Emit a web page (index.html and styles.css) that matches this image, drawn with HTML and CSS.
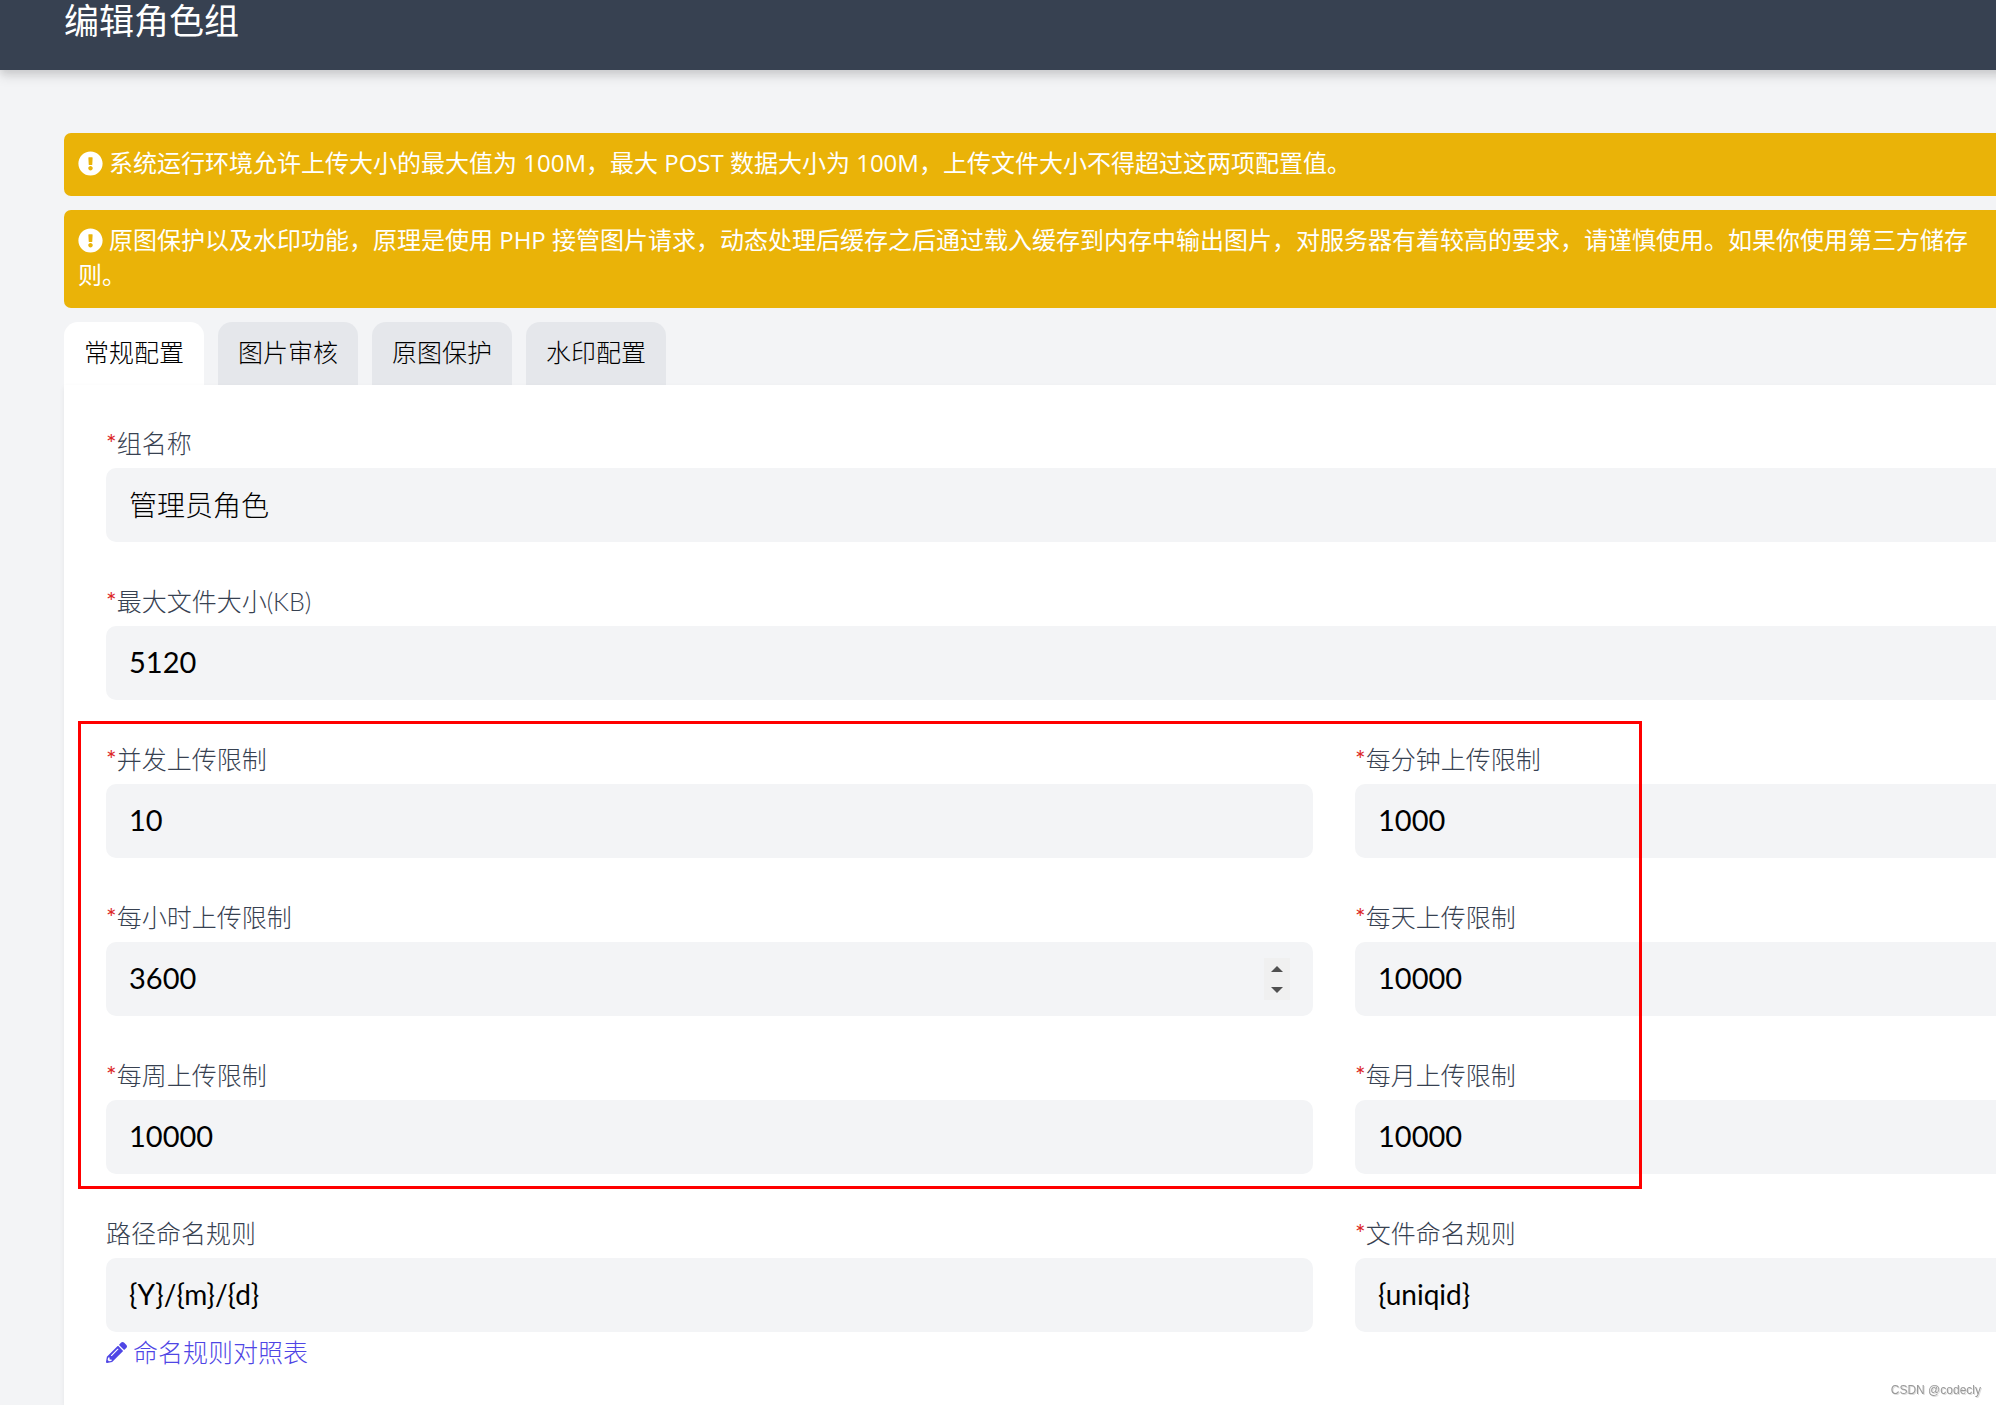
FILE: index.html
```html
<!DOCTYPE html>
<html lang="zh-CN">
<head>
<meta charset="utf-8">
<title>编辑角色组</title>
<link rel="stylesheet" href="styles.css">
</head>
<body>
<svg class="sprite" aria-hidden="true">
  <symbol id="icon-alert" viewBox="0 0 512 512"><path fill="currentColor" d="M504 256c0 136.997-111.043 248-248 248S8 392.997 8 256C8 119.083 119.043 8 256 8s248 111.083 248 248zm-248 50c-25.405 0-46 20.595-46 46s20.595 46 46 46 46-20.595 46-46-20.595-46-46-46zm-43.673-165.346l7.418 136c.347 6.364 5.609 11.346 11.982 11.346h48.546c6.373 0 11.635-4.982 11.982-11.346l7.418-136c.375-6.874-5.098-12.654-11.982-12.654h-63.383c-6.884 0-12.356 5.78-11.981 12.654z"/></symbol>
  <symbol id="icon-pencil" viewBox="0 0 512 512"><path fill="currentColor" d="M497.9 142.1l-46.1 46.1c-4.7 4.7-12.3 4.7-17 0l-111-111c-4.7-4.7-4.7-12.3 0-17l46.1-46.1c18.7-18.7 49.1-18.7 67.9 0l60.1 60.1c18.8 18.7 18.8 49.1 0 67.9zM284.2 99.8L21.6 362.4.4 483.9c-2.9 16.4 11.4 30.6 27.8 27.8l121.5-21.3 262.6-262.6c4.7-4.7 4.7-12.3 0-17l-111-111c-4.8-4.7-12.4-4.7-17.1 0zM124.1 339.9c-5.5-5.5-5.5-14.3 0-19.8l154-154c5.5-5.5 14.3-5.5 19.8 0s5.5 14.3 0 19.8l-154 154c-5.5 5.5-14.3 5.5-19.8 0zM88 424h48v36.3l-64.5 11.3-31.1-31.1L51.7 376H88v48z"/></symbol>
</svg>
<div class="page">
  <header class="header"><h1 class="title">编辑角色组</h1></header>
  <main class="main">
    <p class="notice"><svg class="notice-icon" aria-hidden="true"><use href="#icon-alert"/></svg>系统运行环境允许上传大小的最大值为 100M，最大 POST 数据大小为 100M，上传文件大小不得超过这两项配置值。</p>
    <p class="notice"><svg class="notice-icon" aria-hidden="true"><use href="#icon-alert"/></svg>原图保护以及水印功能，原理是使用 PHP 接管图片请求，动态处理后缓存之后通过载入缓存到内存中输出图片，对服务器有着较高的要求，请谨慎使用。如果你使用第三方储存<br>则。</p>
    <nav class="tabs">
      <button type="button" class="tab tab-active">常规配置</button>
      <button type="button" class="tab">图片审核</button>
      <button type="button" class="tab">原图保护</button>
      <button type="button" class="tab">水印配置</button>
    </nav>
    <form class="panel">
      <div class="field">
        <label class="label" for="name"><span class="required">*</span>组名称</label>
        <input class="input" id="name" type="text" value="管理员角色">
      </div>
      <div class="field">
        <label class="label" for="size"><span class="required">*</span>最大文件大小(KB)</label>
        <input class="input input-number" id="size" type="number" value="5120">
      </div>
      <div class="limits">
        <div class="field">
          <label class="label" for="concurrent"><span class="required">*</span>并发上传限制</label>
          <input class="input input-number" id="concurrent" type="number" value="10">
        </div>
        <div class="field">
          <label class="label" for="minute"><span class="required">*</span>每分钟上传限制</label>
          <input class="input input-number" id="minute" type="number" value="1000">
        </div>
        <div class="field">
          <label class="label" for="hour"><span class="required">*</span>每小时上传限制</label>
          <div class="stepper">
            <input class="input input-number" id="hour" type="number" value="3600">
            <span class="spin">
              <button type="button" class="spin-button" aria-label="增加"><svg class="arrow" viewBox="0 0 12 6"><path d="M0 6L6 0l6 6z"/></svg></button>
              <button type="button" class="spin-button" aria-label="减少"><svg class="arrow" viewBox="0 0 12 6"><path d="M0 0l6 6 6-6z"/></svg></button>
            </span>
          </div>
        </div>
        <div class="field">
          <label class="label" for="day"><span class="required">*</span>每天上传限制</label>
          <input class="input input-number" id="day" type="number" value="10000">
        </div>
        <div class="field">
          <label class="label" for="week"><span class="required">*</span>每周上传限制</label>
          <input class="input input-number" id="week" type="number" value="10000">
        </div>
        <div class="field">
          <label class="label" for="month"><span class="required">*</span>每月上传限制</label>
          <input class="input input-number" id="month" type="number" value="10000">
        </div>
        <div class="highlight"></div>
      </div>
      <div class="columns">
        <div class="field">
          <label class="label" for="path">路径命名规则</label>
          <input class="input input-pattern" id="path" type="text" value="{Y}/{m}/{d}">
          <a class="link" href="#"><svg class="link-icon" aria-hidden="true"><use href="#icon-pencil"/></svg>命名规则对照表</a>
        </div>
        <div class="field">
          <label class="label" for="file"><span class="required">*</span>文件命名规则</label>
          <input class="input input-pattern" id="file" type="text" value="{uniqid}">
        </div>
      </div>
    </form>
  </main>
</div>
<div class="watermark">CSDN @codecly</div>
</body>
</html>
```
FILE: styles.css
```css
* {
  box-sizing: border-box;
}

body {
  margin: 0;
  overflow-x: hidden;
  background: #f3f4f6;
  color: #000;
  font-family: Lato, "Noto Sans CJK SC", sans-serif;
  font-size: 25px;
  line-height: 35px;
}

button,
input {
  font: inherit;
  color: inherit;
}

.sprite {
  position: absolute;
  width: 0;
  height: 0;
}

/* The form runs wider than the window and is cut at its right edge. */
.page {
  display: flex;
  flex-direction: column;
  width: calc(100% + 672px);
  min-height: 100vh;
}

.header {
  padding: 0 64px 29px;
  background: #374151;
  color: #fff;
  box-shadow: 0 7px 11px 0 rgba(0, 0, 0, 0.1), 0 4px 7px 0 rgba(0, 0, 0, 0.08);
}

.title {
  margin: 0;
  font-size: 35px;
  font-weight: 400;
  line-height: 41px;
}

.main {
  display: flex;
  flex: 1;
  flex-direction: column;
  padding: 63px 64px 0;
}

.notice {
  margin: 0 0 14px;
  padding: 12px 14px 16px;
  border-radius: 7px;
  background: #eab308;
  color: #fff;
  font-family: "Open Sans", "Noto Sans CJK SC", sans-serif;
  font-size: 24px;
  white-space: nowrap;
}

.notice-icon {
  width: 25px;
  height: 25px;
  margin-right: 6px;
  vertical-align: -4px;
}

.tabs {
  display: flex;
  gap: 14px;
}

.tab {
  width: 140px;
  padding: 13px 0 15px;
  border: 0;
  border-radius: 14px 14px 0 0;
  background: #e5e7eb;
  font-weight: 300;
}

.tab-active {
  background: #fff;
}

.panel {
  display: flex;
  flex: 1;
  flex-direction: column;
  gap: 42px;
  padding: 41px 42px 32px;
  background: #fff;
  box-shadow: 0 2px 5px rgba(0, 0, 0, 0.06);
  font-weight: 300;
}

.columns,
.limits {
  display: grid;
  grid-template-columns: 1fr 1fr;
  gap: 42px;
}

.limits {
  position: relative;
}

.highlight {
  position: absolute;
  top: -21px;
  bottom: -15px;
  left: -28px;
  width: calc(62.5% + 29px);
  border: 3px solid #f00;
  pointer-events: none;
}

.field {
  display: flex;
  flex-direction: column;
}

.label {
  margin-bottom: 8px;
  color: #374151;
  line-height: 34px;
}

.required {
  color: #dc2626;
  font-weight: 400;
}

.input {
  width: 100%;
  height: 74px;
  padding: 0 23px 3px;
  border: 0;
  border-radius: 10px;
  background: #f3f4f6;
  font-size: 28px;
}

.input-number {
  font-size: 29px;
  font-weight: 400;
  appearance: textfield;
}

.input-pattern {
  font-weight: 400;
}

.stepper {
  position: relative;
}

.spin {
  position: absolute;
  top: 16px;
  right: 23px;
  display: flex;
  flex-direction: column;
  width: 26px;
  height: 42px;
  background: #f0f0f0;
}

.spin-button {
  display: flex;
  flex: 1;
  align-items: center;
  justify-content: center;
  padding: 0;
  border: 0;
  background: none;
}

.arrow {
  width: 12px;
  height: 6px;
  fill: #505050;
}

.link {
  display: flex;
  align-items: center;
  align-self: flex-start;
  gap: 6px;
  margin-top: 3px;
  color: #4f46e5;
  text-decoration: none;
}

.link-icon {
  width: 21px;
  height: 21px;
}

.watermark {
  position: fixed;
  right: 15px;
  bottom: 5px;
  color: #999;
  font-family: "Liberation Sans", sans-serif;
  font-size: 12px;
  line-height: 20px;
  text-shadow: 1px 1px 0 #ddd;
}
```
